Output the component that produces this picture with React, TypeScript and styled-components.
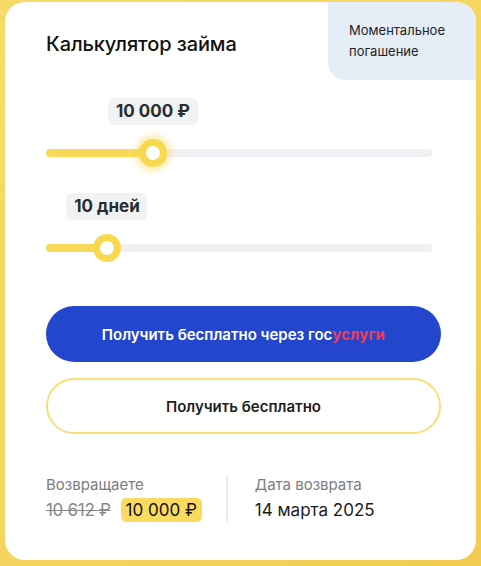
import React from "react";
import styled, { createGlobalStyle } from "styled-components";

const Global = createGlobalStyle`
  html, body { margin: 0; padding: 0; }
  body {
    width: 481px;
    height: 566px;
    overflow: hidden;
    background: linear-gradient(135deg, #f6da6a 0%, #f4d45e 60%, #f1cb50 100%);
    font-family: Inter, "Noto Sans", "Liberation Sans", sans-serif;
  }
`;

const Page = styled.div`
  padding: 2px 5px 6px 5px;
  box-sizing: border-box;
  height: 566px;
`;

const Card = styled.div`
  position: relative;
  box-sizing: border-box;
  height: 558px;
  background: #ffffff;
  border-radius: 20px;
  padding: 29px 35px 0 41px;
  display: flex;
  flex-direction: column;
  overflow: hidden;
`;

const Badge = styled.div`
  position: absolute;
  top: 0;
  right: 0;
  width: 148px;
  height: 78px;
  box-sizing: border-box;
  background: #e5edf6;
  border-bottom-left-radius: 18px;
  padding: 18px 10px 0 21px;
  font-size: 13px;
  line-height: 21px;
  color: #1f2226;
  font-weight: 400;
`;

const Title = styled.h1`
  margin: 0;
  font-size: 20px;
  line-height: 26px;
  font-weight: 500;
  color: #111;
  letter-spacing: -0.1px;
`;

const Sliders = styled.div`
  margin-top: 41px;
  margin-right: 9px;
  display: flex;
  flex-direction: column;
  gap: 36px;
`;

const SliderBlock = styled.div`
  display: flex;
  flex-direction: column;
`;

const BubbleRow = styled.div`
  position: relative;
  height: 27px;
`;

const Bubble = styled.div`
  position: absolute;
  top: 0;
  transform: translateX(-50%);
  height: 27px;
  box-sizing: border-box;
  padding: 0 8px;
  border-radius: 6px;
  background: #f1f2f4;
  color: #2b2c2e;
  font-size: 17px;
  font-weight: 700;
  line-height: 27px;
  white-space: nowrap;
`;

const Track = styled.div`
  position: relative;
  margin-top: 24px;
  height: 8px;
  border-radius: 4px;
  background: #eff0f3;
`;

const Fill = styled.div`
  position: absolute;
  left: 0;
  top: 0;
  bottom: 0;
  border-radius: 4px;
  background: #f8da58;
`;

const Thumb = styled.div<{ $glow?: boolean }>`
  position: absolute;
  top: 50%;
  width: 28px;
  height: 28px;
  box-sizing: border-box;
  border-radius: 50%;
  border: 7px solid #f8d84f;
  background: #fff;
  transform: translate(-50%, -50%);
  box-shadow: ${(p) =>
    p.$glow ? "0 0 6px 4px rgba(248, 216, 79, 0.45)" : "none"};
`;

const Buttons = styled.div`
  margin-top: 54px;
  display: flex;
  flex-direction: column;
  gap: 16px;
`;

const Button = styled.button<{ $variant: "primary" | "outline" }>`
  height: 56px;
  width: 100%;
  border-radius: 28px;
  font-family: inherit;
  font-size: 15px;
  font-weight: 600;
  cursor: pointer;
  display: flex;
  align-items: center;
  justify-content: center;
  box-sizing: border-box;
  background: ${(p) => (p.$variant === "primary" ? "#2346cc" : "#ffffff")};
  color: ${(p) => (p.$variant === "primary" ? "#ffffff" : "#1d1e20")};
  border: ${(p) =>
    p.$variant === "primary" ? "none" : "2px solid #f5e07c"};
`;

const Gos = styled.span`
  color: #ee3d55;
  font-weight: 700;
  letter-spacing: 0.2px;
`;

const Summary = styled.div`
  margin-top: 41px;
  display: flex;
  align-items: stretch;
`;

const SummaryCol = styled.div`
  display: flex;
  flex-direction: column;
  gap: 3px;
`;

const Divider = styled.div`
  width: 2px;
  background: #e8ebef;
  margin: 0 27px 0 24px;
  border-radius: 1px;
`;

const Label = styled.div`
  font-size: 15px;
  line-height: 20px;
  color: #7b7d80;
`;

const ValueRow = styled.div`
  display: flex;
  align-items: center;
  gap: 10px;
  height: 24px;
`;

const Old = styled.span`
  font-size: 17px;
  color: #86888b;
  text-decoration: line-through;
  text-decoration-thickness: 1px;
  letter-spacing: -0.3px;
`;

const Pill = styled.span`
  background: #f9dc5f;
  border-radius: 5px;
  padding: 0 5px;
  height: 24px;
  line-height: 24px;
  font-size: 17px;
  color: #111;
`;

const Value = styled.span`
  font-size: 17px;
  line-height: 24px;
  color: #1a1b1d;
`;

const TRACK_WIDTH = 386;

type SliderProps = { label: string; percent: number; glow?: boolean };

const Slider: React.FC<SliderProps> = ({ label, percent, glow }) => {
  const x = (TRACK_WIDTH * percent) / 100;
  return (
    <SliderBlock>
      <BubbleRow>
        <Bubble style={{ left: `${x}px` }}>{label}</Bubble>
      </BubbleRow>
      <Track>
        <Fill style={{ width: `${x}px` }} />
        <Thumb $glow={glow} style={{ left: `${x}px` }} />
      </Track>
    </SliderBlock>
  );
};

export default function App() {
  return (
    <>
      <Global />
      <Page>
        <Card>
          <Badge>
            Моментальное
            <br />
            погашение
          </Badge>
          <Title>Калькулятор займа</Title>
          <Sliders>
            <Slider label="10 000 ₽" percent={27.7} glow />
            <Slider label="10 дней" percent={15.8} />
          </Sliders>
          <Buttons>
            <Button $variant="primary">
              Получить бесплатно через гос<Gos>услуги</Gos>
            </Button>
            <Button $variant="outline">Получить бесплатно</Button>
          </Buttons>
          <Summary>
            <SummaryCol>
              <Label>Возвращаете</Label>
              <ValueRow>
                <Old>10 612 ₽</Old>
                <Pill>10 000 ₽</Pill>
              </ValueRow>
            </SummaryCol>
            <Divider />
            <SummaryCol>
              <Label>Дата возврата</Label>
              <ValueRow>
                <Value>14 марта 2025</Value>
              </ValueRow>
            </SummaryCol>
          </Summary>
        </Card>
      </Page>
    </>
  );
}
